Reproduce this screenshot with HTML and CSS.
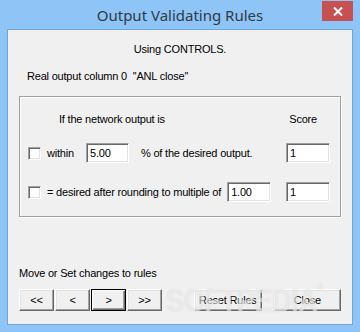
FILE: index.html
```html
<!DOCTYPE html>
<html lang="en">
<head>
  <meta charset="UTF-8" />
  <title>Output Validating Rules</title>
  <link rel="stylesheet" href="styles.css">
</head>
<body>

  <div class="window">
    <div class="titlebar">
      <span class="title">Output Validating Rules</span>
      <span class="close">
        <svg width="10" height="9" viewBox="0 0 10 9">
          <path d="M1 0.5 L9 8.5 M9 0.5 L1 8.5" stroke="#fff" stroke-width="2" />
        </svg>
      </span>
    </div>

    <div class="client">
      <p class="using">Using CONTROLS.</p>
      <p class="column">Real output column 0&nbsp;&nbsp;''ANL close''</p>

      <div class="group">
        <div class="head">
          <span>If the network output is</span>
          <span class="score-label">Score</span>
        </div>

        <div class="rule">
          <input type="checkbox" class="check">
          <span class="within">within</span>
          <input type="text" class="edit pct" value="5.00">
          <span class="desc">% of the desired output.</span>
          <input type="text" class="edit score" value="1">
        </div>

        <div class="rule second">
          <input type="checkbox" class="check">
          <span>= desired after rounding to multiple of</span>
          <input type="text" class="edit multiple" value="1.00">
          <input type="text" class="edit score" value="1">
        </div>
      </div>

      <p class="move">Move or Set changes to rules</p>

      <div class="buttons">
        <div class="nav">
          <button class="btn">&lt;&lt;</button>
          <button class="btn">&lt;</button>
          <button class="btn focus">&gt;</button>
          <button class="btn">&gt;&gt;</button>
        </div>
        <button class="btn wide reset">Reset Rules</button>
        <button class="btn wide close-btn">Close</button>
      </div>

      <div class="watermark">SOFTPEDIA<sup>®</sup></div>
    </div>
  </div>

</body>
</html>
```

FILE: styles.css
```css
body {
  margin: 0;
  font-family: "Liberation Sans", Arial, sans-serif;
  font-size: 11px;
  letter-spacing: -0.2px;
  color: #000;
}

.window {
  width: 360px;
  height: 332px;
  box-sizing: border-box;
  background: #8ec5f6;
  padding: 0 7px 7px;
  display: flex;
  flex-direction: column;
}

.titlebar {
  height: 29px;
  display: flex;
  align-items: center;
  justify-content: center;
  position: relative;
}

.title {
  font-family: "Noto Sans", sans-serif;
  font-size: 15px;
  letter-spacing: 0;
  color: #2e3a48;
  margin-top: 1px;
}

.close {
  position: absolute;
  right: 0;
  top: 1px;
  width: 31px;
  height: 20px;
  background: #c75050;
  display: flex;
  align-items: center;
  justify-content: center;
}

.client {
  flex: 1;
  background: #f0f0f0;
  border: 1px solid #6fa6da;
  padding: 0 11px;
  position: relative;
  overflow: hidden;
}

p {
  margin: 0;
  line-height: 13px;
}

.using {
  margin-top: 13px;
  text-align: center;
}

.column {
  margin-top: 14px;
  padding-left: 8px;
}

.group {
  margin-top: 13px;
  border: 1px solid #a0a0a0;
  box-shadow: inset 1px 1px #fff, 1px 1px #fff;
  padding: 16px 10px 14px 8px;
}

.head {
  display: flex;
  line-height: 13px;
  padding-left: 31px;
}

.score-label {
  margin-left: auto;
  margin-right: 13px;
}

.rule {
  display: flex;
  align-items: center;
  height: 20px;
  margin-top: 17px;
}

.rule.second {
  margin-top: 19px;
}

.check {
  appearance: none;
  margin: 0 6px 0 0;
  width: 13px;
  height: 13px;
  box-sizing: border-box;
  background: #fff;
  border: 1px solid;
  border-color: #a0a0a0 #fff #fff #a0a0a0;
  box-shadow: inset 1px 1px #696969, inset -1px -1px #e3e3e3;
}

.within {
  width: 39px;
}

.edit {
  box-sizing: border-box;
  height: 20px;
  margin: 0;
  padding: 0 3px;
  font: inherit;
  font-size: 11px;
  letter-spacing: -0.2px;
  background: #fff;
  border: 1px solid;
  border-color: #a0a0a0 #fff #fff #a0a0a0;
  box-shadow: inset 1px 1px #696969, inset -1px -1px #e3e3e3;
  outline: none;
}

.pct {
  width: 43px;
  margin-right: 12px;
}

.multiple {
  width: 44px;
  margin-left: 6px;
}

.score {
  width: 44px;
  margin-left: auto;
}

.move {
  margin-top: 50px;
}

.buttons {
  display: flex;
  margin-top: 9px;
}

.nav {
  display: flex;
  gap: 1px;
}

.btn {
  box-sizing: border-box;
  width: 35px;
  height: 22px;
  margin: 0;
  padding: 0;
  font: inherit;
  font-size: 11px;
  letter-spacing: -0.2px;
  color: #000;
  background: #f0f0f0;
  border: 1px solid;
  border-color: #fff #696969 #696969 #fff;
  box-shadow: inset -1px -1px #a0a0a0, inset 1px 1px #e3e3e3;
}

.btn.focus {
  border-color: #000;
  box-shadow: inset 1px 1px #fff, inset -1px -1px #696969, inset -2px -2px #a0a0a0;
}

.wide {
  width: 68px;
}

.reset {
  margin-left: 32px;
}

.close-btn {
  margin-left: 12px;
}

.watermark {
  position: absolute;
  left: 158px;
  top: 252px;
  font-family: "Liberation Sans", Arial, sans-serif;
  font-weight: bold;
  font-size: 33px;
  letter-spacing: -1px;
  color: rgba(255, 255, 255, 0.55);
  text-shadow: 0 0 1px rgba(150, 150, 150, 0.35);
  transform: scaleX(0.84);
  transform-origin: left top;
  pointer-events: none;
}

.watermark sup {
  font-size: 10px;
  font-weight: normal;
  vertical-align: top;
}
```
